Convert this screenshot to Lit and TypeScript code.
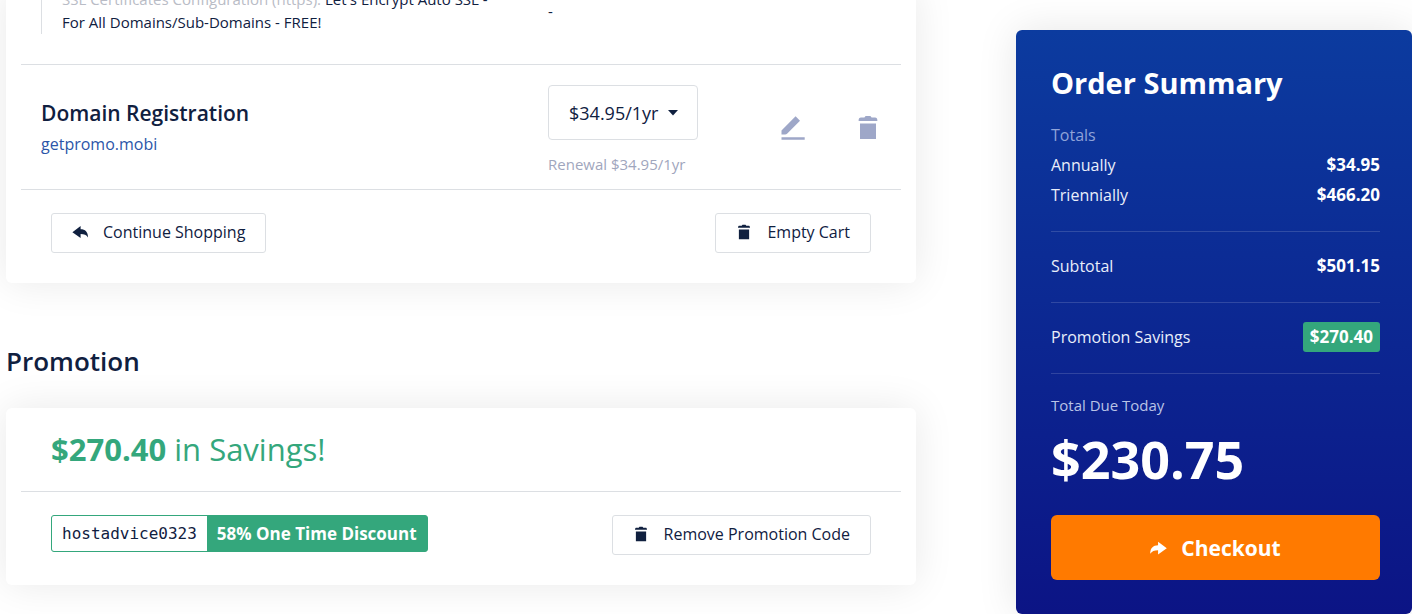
import { LitElement, html, css, svg } from "lit";
import { customElement, property } from "lit/decorators.js";

const trashShape = svg`<path d="M6 2.6h3.4L10.600 1h4.800l1.200 1.600H20c1.600 0 2.400 1 2.400 3.400H3.600C3.600 3.600 4.400 2.600 6 2.600zM5 8.600h16V24H5z"/>`;
const replyShape = svg`<path d="M8.600 0.600v3.200c4.600 0 7.400 2.600 7.400 8.200-1.600-2.600-3.800-3.400-7.400-3.400v4L0.400 6.700z"/>`;
const forwardShape = svg`<path d="M7.600 0.600v3.200C3 3.800.2 6.400.2 12c1.600-2.600 3.800-3.400 7.400-3.400v4l8.200-5.900z"/>`;
const editShape = svg`<path d="M14.600 0.300 19 4.700 6.300 17.600Q5.300 18.600 4 18.600H0.500V14.400zM0.500 21.200h23.200v2.600H0.500z"/>`;

@customElement("cart-icon")
class CartIcon extends LitElement {
  @property() name = "trash";

  static styles = css`
    :host { display: inline-flex; }
    svg { display: block; fill: currentColor; width: 100%; height: 100%; }
  `;

  render() {
    const icons: Record<string, [string, unknown]> = {
      trash: ["3 0 20 25", trashShape],
      reply: ["0 0 16 13", replyShape],
      forward: ["0 0 16 13", forwardShape],
      edit: ["0 0 24 24", editShape],
    };
    const [box, shape] = icons[this.name];
    return html`<svg viewBox=${box} aria-hidden="true">${shape}</svg>`;
  }
}

@customElement("order-summary")
class OrderSummary extends LitElement {
  static styles = css`
    :host {
      display: block;
      box-sizing: border-box;
      padding: 30px 32px 34px 35px;
      border-radius: 6px;
      background: linear-gradient(#0c3b9f, #0c1485);
      box-shadow: 0 0 40px rgba(0, 0, 0, 0.1);
      color: #fff;
      font-size: 16px;
      line-height: 30px;
    }
    .title { margin: 0 0 14px; font-size: 29px; line-height: 46px; font-weight: 700; }
    .rows { margin: 0; font-weight: 500; }
    .heading { color: #8fa3d8; font-weight: 500; }
    .group { padding: 19px 0 21px; border-bottom: 1px solid rgba(255, 255, 255, 0.15); }
    .group.first { padding-top: 0; }
    .row { display: flex; justify-content: space-between; }
    dt { color: #e9eefa; }
    dd { margin: 0; font-size: 17px; font-weight: 700; }
    .badge { padding: 0 7px; border-radius: 3px; background: #34a77c; }
    .due { margin: 16px 0 0; font-size: 15px; font-weight: 500; color: #b9c3e6; }
    .total { margin: 9px 0 26px; font-size: 52px; line-height: 60px; font-weight: 700; }
    .checkout {
      display: flex;
      align-items: center;
      justify-content: center;
      gap: 14px;
      width: 100%;
      height: 65px;
      border: 0;
      border-radius: 6px;
      background: #ff7a00;
      color: #fff;
      font: 700 21px/30px var(--font);
      cursor: pointer;
    }
    .checkout cart-icon { width: 17px; height: 14px; }
  `;

  render() {
    return html`
      <h2 class="title">Order Summary</h2>
      <div class="heading">Totals</div>
      <dl class="rows">
        <div class="group first">
          <div class="row"><dt>Annually</dt><dd>$34.95</dd></div>
          <div class="row"><dt>Triennially</dt><dd>$466.20</dd></div>
        </div>
        <div class="group row"><dt>Subtotal</dt><dd>$501.15</dd></div>
        <div class="group row"><dt>Promotion Savings</dt><dd class="badge">$270.40</dd></div>
      </dl>
      <p class="due">Total Due Today</p>
      <p class="total">$230.75</p>
      <button class="checkout" type="button"><cart-icon name="forward"></cart-icon>Checkout</button>
    `;
  }
}

@customElement("app-root")
class AppRoot extends LitElement {
  static styles = css`
    :host {
      --font: "Open Sans", "Noto Sans", sans-serif;
      --ink: #10203f;
      --line: #dcdfe3;
      --green: #34a77c;
      display: block;
      overflow: hidden;
      min-height: 100vh;
      background: #fff;
      color: var(--ink);
      font: 16px/24px var(--font);
    }
    .page {
      display: grid;
      grid-template-columns: minmax(0, 1fr) 396px;
      gap: 100px;
      align-items: start;
      padding-left: 6px;
    }
    .summary { margin-top: 30px; }
    .card {
      padding: 0 15px;
      border-radius: 6px;
      background: #fff;
      box-shadow: 0 0 40px rgba(0, 0, 0, 0.09);
    }
    .items { margin-top: -12px; }
    .row {
      display: grid;
      grid-template-columns: 507px minmax(150px, 1fr) auto;
      padding: 0 20px;
      border-bottom: 1px solid var(--line);
    }
    .plan { padding-bottom: 30px; font-size: 15px; line-height: 23px; }
    .option { margin: 0; padding: 0 50px 0 20px; border-left: 1px solid var(--line); }
    .muted { color: #b9bcc6; }
    .option-price { align-self: center; }
    .domain { padding-top: 20px; padding-bottom: 12px; }
    .name { margin: 13px 0 4px; font-size: 21px; line-height: 30px; font-weight: 600; }
    .link { color: #2c55a8; font-size: 16px; text-decoration: none; }
    .term { display: inline-grid; }
    .term select, .term svg { grid-area: 1 / 1; }
    .term select {
      appearance: none;
      width: 150px;
      height: 55px;
      padding: 0 20px;
      border: 1px solid var(--line);
      border-radius: 4px;
      background: #fff;
      color: var(--ink);
      font: 18px/24px var(--font);
    }
    .term svg { align-self: center; justify-self: end; margin-right: 20px; pointer-events: none; }
    .renewal { margin: 12px 0 0; padding-bottom: 1px; color: #9fa6bd; font-size: 15px; }
    .actions { display: flex; gap: 53px; align-items: center; padding: 0 3px 7px 0; }
    .icon-button {
      display: flex;
      padding: 0;
      border: 0;
      background: none;
      color: #9ea7c8;
      cursor: pointer;
    }
    .edit { width: 24px; height: 24px; }
    .bin { width: 20px; height: 25px; }
    .bar {
      display: flex;
      justify-content: space-between;
      align-items: flex-start;
      padding: 23px 30px 30px;
    }
    .button {
      display: flex;
      align-items: center;
      height: 40px;
      padding: 0 20px 2px;
      gap: 15px;
      border: 1px solid var(--line);
      border-radius: 3px;
      background: #fff;
      color: var(--ink);
      font: 16px/24px var(--font);
      cursor: pointer;
    }
    .button cart-icon { width: 16px; height: 16px; }
    .section { margin: 60px 0 29px; font-size: 26px; line-height: 36px; font-weight: 600; }
    .savings {
      margin: 0;
      padding: 20px 30px;
      border-bottom: 1px solid var(--line);
      color: var(--green);
      font-size: 31px;
      line-height: 43px;
    }
    .code {
      display: flex;
      border: 1px solid var(--green);
      border-radius: 3px;
      background: var(--green);
      color: #fff;
      font-size: 17px;
      font-weight: 700;
      line-height: 35px;
    }
    .code code {
      padding: 0 10px;
      border-radius: 2px 0 0 2px;
      background: #fff;
      color: var(--ink);
      font: 400 16px/35px "DejaVu Sans Mono", monospace;
    }
    .code span { padding: 0 10px; }
  `;

  render() {
    return html`
      <div class="page">
        <main>
          <section class="card items">
            <div class="row plan">
              <p class="option">
                <span class="muted">SSL Certificates Configuration (https):</span> Let's Encrypt Auto SSL -
                For All Domains/Sub-Domains - FREE!
              </p>
              <div class="option-price">-</div>
            </div>
            <div class="row domain">
              <div>
                <h3 class="name">Domain Registration</h3>
                <a class="link" href="#">getpromo.mobi</a>
              </div>
              <div>
                <label class="term">
                  <select aria-label="Billing term">
                    <option>$34.95/1yr</option>
                  </select>
                  <svg width="10" height="6" viewBox="0 0 10 6" aria-hidden="true"><path d="M0 0h10L5 5.500z" fill="#10203f" /></svg>
                </label>
                <p class="renewal">Renewal $34.95/1yr</p>
              </div>
              <div class="actions">
                <button class="icon-button" type="button" aria-label="Edit"><cart-icon class="edit" name="edit"></cart-icon></button>
                <button class="icon-button" type="button" aria-label="Remove"><cart-icon class="bin"></cart-icon></button>
              </div>
            </div>
            <div class="bar">
              <button class="button" type="button"><cart-icon name="reply"></cart-icon>Continue Shopping</button>
              <button class="button" type="button"><cart-icon></cart-icon>Empty Cart</button>
            </div>
          </section>
          <h2 class="section">Promotion</h2>
          <section class="card">
            <p class="savings"><strong>$270.40</strong> in Savings!</p>
            <div class="bar">
              <div class="code"><code>hostadvice0323</code><span>58% One Time Discount</span></div>
              <button class="button" type="button"><cart-icon></cart-icon>Remove Promotion Code</button>
            </div>
          </section>
        </main>
        <order-summary class="summary"></order-summary>
      </div>
    `;
  }
}
